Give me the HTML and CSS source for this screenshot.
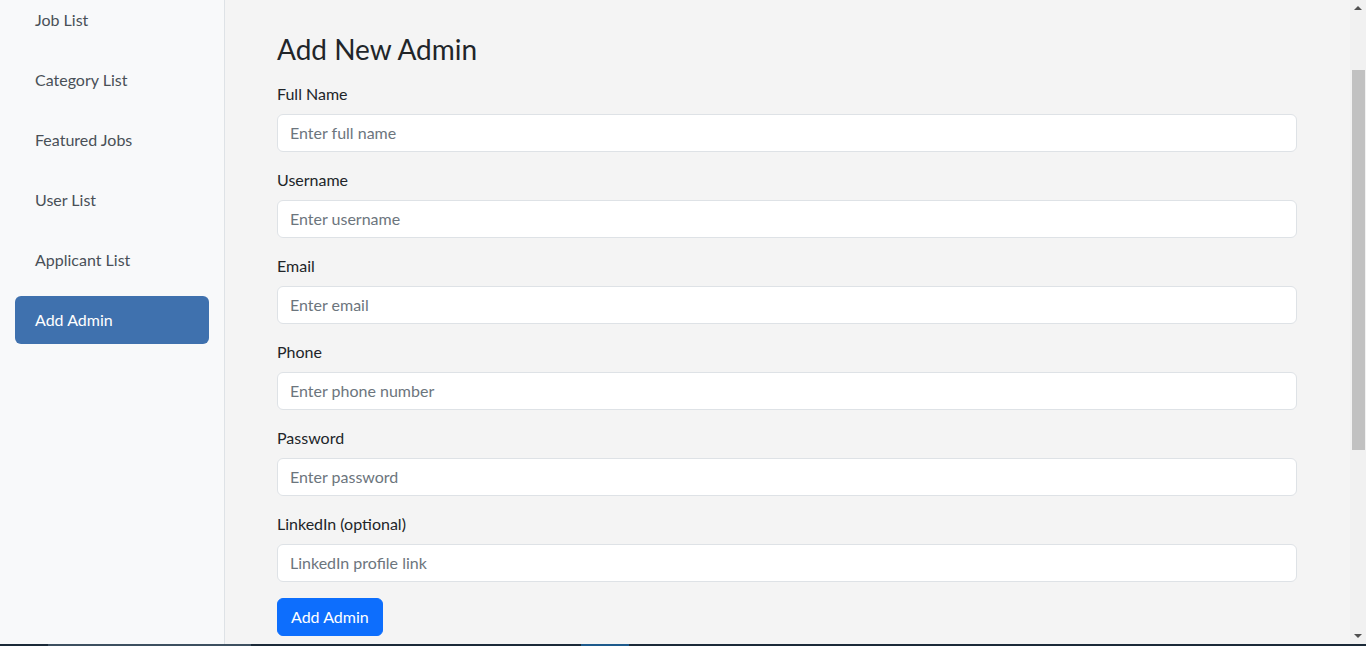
FILE: index.html
```html
<!DOCTYPE html>
<html lang="en">
<head>
<meta charset="utf-8">
<title>Add New Admin</title>
<link rel="stylesheet" href="styles.css">
</head>
<body>
<div class="screen">
  <div class="row">
    <aside class="sidebar">
      <nav class="nav">
        <a class="nav-link" href="#">Job List</a>
        <a class="nav-link" href="#">Category List</a>
        <a class="nav-link" href="#">Featured Jobs</a>
        <a class="nav-link" href="#">User List</a>
        <a class="nav-link" href="#">Applicant List</a>
        <a class="nav-link active" href="#">Add Admin</a>
      </nav>
    </aside>
    <main class="main">
      <h3 class="title">Add New Admin</h3>
      <form class="form">
        <div class="field">
          <label class="label">Full Name</label>
          <input class="control" type="text" placeholder="Enter full name">
        </div>
        <div class="field">
          <label class="label">Username</label>
          <input class="control" type="text" placeholder="Enter username">
        </div>
        <div class="field">
          <label class="label">Email</label>
          <input class="control" type="email" placeholder="Enter email">
        </div>
        <div class="field">
          <label class="label">Phone</label>
          <input class="control" type="text" placeholder="Enter phone number">
        </div>
        <div class="field">
          <label class="label">Password</label>
          <input class="control" type="password" placeholder="Enter password">
        </div>
        <div class="field">
          <label class="label">LinkedIn (optional)</label>
          <input class="control" type="text" placeholder="LinkedIn profile link">
        </div>
        <button class="btn" type="button">Add Admin</button>
      </form>
    </main>
    <div class="scrollbar">
      <span class="arrow up"></span>
      <span class="track"><span class="thumb"></span></span>
      <span class="arrow down"></span>
    </div>
  </div>
  <div class="taskbar">
    <span class="tb-seg tb-a"></span>
    <span class="tb-seg tb-b"></span>
    <span class="tb-seg tb-c"></span>
    <span class="tb-seg tb-d"></span>
  </div>
</div>
</body>
</html>
```

FILE: styles.css
```css
* { box-sizing: border-box; }
html, body { margin: 0; padding: 0; }
body {
  font-family: Lato, "Noto Sans", "Liberation Sans", sans-serif;
  font-size: 16px;
  line-height: 1.5;
  color: #212529;
  background: #f4f4f4;
  overflow: hidden;
}
.screen {
  height: 646px;
  display: flex;
  flex-direction: column;
}
.row {
  flex: 1;
  display: flex;
  min-height: 0;
  overflow: hidden;
}
.sidebar {
  width: 225px;
  flex: none;
  background: #f8f9fa;
  border-right: 1px solid #dee2e6;
  padding: 0 15px;
}
.nav {
  display: flex;
  flex-direction: column;
  gap: 12px;
  margin-top: -4px;
}
.nav-link {
  display: block;
  height: 48px;
  line-height: 48px;
  padding: 0 20px;
  color: #495057;
  text-decoration: none;
  border-radius: 6px;
  font-size: 16px;
}
.nav-link.active {
  background: #3f71ae;
  color: #fff;
}
.main {
  flex: 1;
  padding: 0 53px 0 52px;
  min-width: 0;
}
.title {
  margin: 33px 0 15px;
  font-size: 28px;
  font-weight: 400;
  line-height: 1.2;
  color: #212529;
}
.form { display: flex; flex-direction: column; }
.field {
  display: flex;
  flex-direction: column;
  margin-bottom: 16px;
}
.label {
  margin-bottom: 8px;
  line-height: 24px;
}
.control {
  height: 38px;
  padding: 6px 12px;
  font: inherit;
  color: #212529;
  background: #fff;
  border: 1px solid #dee2e6;
  border-radius: 6px;
  outline: none;
}
.control::placeholder { color: #6c757d; opacity: 1; }
.btn {
  align-self: flex-start;
  height: 38px;
  padding: 0 13px;
  font: inherit;
  color: #fff;
  background: #0d6efd;
  border: 1px solid #0d6efd;
  border-radius: 6px;
  margin-top: 0;
}
.scrollbar {
  width: 16px;
  flex: none;
  background: #f1f1f1;
  display: flex;
  flex-direction: column;
  align-items: center;
}
.arrow {
  width: 0;
  height: 0;
  border-left: 4px solid transparent;
  border-right: 4px solid transparent;
  flex: none;
}
.arrow.up {
  border-bottom: 4px solid #505050;
  margin: 6px 0 0;
}
.arrow.down {
  border-top: 4px solid #505050;
  margin: 0 0 6px;
}
.track {
  flex: 1;
  width: 100%;
  padding: 60px 1px 0 2px;
  display: flex;
  flex-direction: column;
}
.thumb {
  display: block;
  height: 380px;
  background: #c1c1c1;
}
.taskbar {
  height: 2px;
  flex: none;
  background: #1b2a38;
  display: flex;
}
.tb-seg { display: block; height: 100%; }
.tb-a { width: 48px; }
.tb-b { width: 203px; background: #3d5060; }
.tb-c { width: 330px; }
.tb-d { width: 48px; background: #1d5a8c; }
```
